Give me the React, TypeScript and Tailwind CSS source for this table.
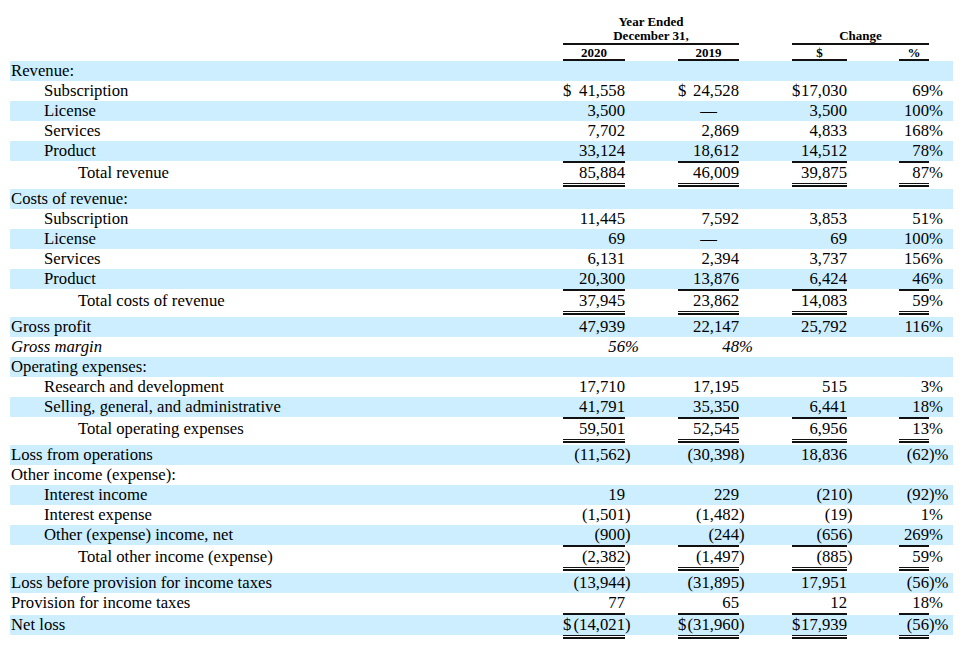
import React from "react";

type Rule = "single" | "double";
type Line = { label: string; ind?: number; v?: string[]; rule?: Rule; italic?: boolean };

const grid = "grid w-[943px] grid-cols-[553px_62px_53px_61px_53px_55px_52px_30px_24px]";

const lines: Line[] = [
  { label: "Revenue:" },
  { label: "Subscription", ind: 1, v: ["$41,558", "$24,528", "$17,030", "69%"] },
  { label: "License", ind: 1, v: ["3,500", "—", "3,500", "100%"] },
  { label: "Services", ind: 1, v: ["7,702", "2,869", "4,833", "168%"] },
  { label: "Product", ind: 1, v: ["33,124", "18,612", "14,512", "78%"], rule: "single" },
  { label: "Total revenue", ind: 2, v: ["85,884", "46,009", "39,875", "87%"], rule: "double" },
  { label: "Costs of revenue:" },
  { label: "Subscription", ind: 1, v: ["11,445", "7,592", "3,853", "51%"] },
  { label: "License", ind: 1, v: ["69", "—", "69", "100%"] },
  { label: "Services", ind: 1, v: ["6,131", "2,394", "3,737", "156%"] },
  { label: "Product", ind: 1, v: ["20,300", "13,876", "6,424", "46%"], rule: "single" },
  { label: "Total costs of revenue", ind: 2, v: ["37,945", "23,862", "14,083", "59%"], rule: "double" },
  { label: "Gross profit", v: ["47,939", "22,147", "25,792", "116%"] },
  { label: "Gross margin", italic: true, v: ["56%", "48%", "", ""] },
  { label: "Operating expenses:" },
  { label: "Research and development", ind: 1, v: ["17,710", "17,195", "515", "3%"] },
  { label: "Selling, general, and administrative", ind: 1, v: ["41,791", "35,350", "6,441", "18%"], rule: "single" },
  { label: "Total operating expenses", ind: 2, v: ["59,501", "52,545", "6,956", "13%"], rule: "double" },
  { label: "Loss from operations", v: ["(11,562)", "(30,398)", "18,836", "(62)%"] },
  { label: "Other income (expense):" },
  { label: "Interest income", ind: 1, v: ["19", "229", "(210)", "(92)%"] },
  { label: "Interest expense", ind: 1, v: ["(1,501)", "(1,482)", "(19)", "1%"] },
  { label: "Other (expense) income, net", ind: 1, v: ["(900)", "(244)", "(656)", "269%"], rule: "single" },
  { label: "Total other income (expense)", ind: 2, v: ["(2,382)", "(1,497)", "(885)", "59%"], rule: "double" },
  { label: "Loss before provision for income taxes", v: ["(13,944)", "(31,895)", "17,951", "(56)%"] },
  { label: "Provision for income taxes", v: ["77", "65", "12", "18%"], rule: "single" },
  { label: "Net loss", v: ["$(14,021)", "$(31,960)", "$17,939", "(56)%"], rule: "double" },
];

// split "$(14,021)" into "$", "(14,021", ")"
function split(raw: string) {
  let s = raw;
  let pre = "";
  let suf = "";
  if (s.startsWith("$")) {
    pre = "$";
    s = s.slice(1);
  }
  if (s.endsWith(")%")) suf = ")%";
  else if (s.endsWith("%")) suf = "%";
  else if (s.endsWith(")")) suf = ")";
  return { pre, num: s.slice(0, s.length - suf.length), suf };
}

function Row({ line, band }: { line: Line; band: boolean }) {
  const pad = line.ind === 2 ? "pl-[68px]" : line.ind === 1 ? "pl-[34px]" : "pl-px";
  const vals = line.v ?? ["", "", "", ""];
  return (
    <div>
      <div className={`${grid} h-5 leading-5 ${band ? "bg-[#cceeff]" : ""} ${line.italic ? "italic" : ""}`}>
        <div className={`${pad} whitespace-nowrap`}>{line.label}</div>
        {vals.map((raw, i) => {
          if (raw === "—")
            return (
              <React.Fragment key={i}>
                <div className="text-center">—</div>
                <div />
              </React.Fragment>
            );
          const c = split(raw);
          return (
            <React.Fragment key={i}>
              <div className="flex justify-between whitespace-nowrap">
                <span>{c.pre}</span>
                <span>{c.num}</span>
              </div>
              <div className="whitespace-nowrap">{c.suf}</div>
            </React.Fragment>
          );
        })}
      </div>
      {line.rule === "single" && (
        <div className={`${grid} h-[2px]`}>
          <div />
          {[0, 1, 2, 3].map((i) => (
            <React.Fragment key={i}>
              <div className="h-[2px] bg-[#111]" />
              <div />
            </React.Fragment>
          ))}
        </div>
      )}
      {line.rule === "double" && (
        <div className={`${grid} h-[4px] mb-[2px]`}>
          <div />
          {[0, 1, 2, 3].map((i) => (
            <React.Fragment key={i}>
              <div className="h-[4px] border-t border-b-2 border-[#111]" />
              <div />
            </React.Fragment>
          ))}
        </div>
      )}
    </div>
  );
}

export default function App() {
  return (
    <div className="min-h-screen bg-white text-black font-['Liberation_Serif',serif] pl-[10px] text-[16.7px]">
      {/* column heads */}
      <div className={`${grid} pt-[15px] text-[13px] font-bold leading-[14px]`}>
        <div className="col-start-2 col-span-3 text-center">Year Ended</div>
        <div className="col-start-2 col-span-3 row-start-2 text-center border-b-2 border-[#111]">December 31,</div>
        <div className="col-start-6 col-span-3 row-start-2 text-center border-b-2 border-[#111]">Change</div>
        <div className="col-start-2 row-start-3 text-center border-b-2 border-[#111] leading-[12px] pt-[2px]">2020</div>
        <div className="col-start-4 row-start-3 text-center border-b-2 border-[#111] leading-[12px] pt-[2px]">2019</div>
        <div className="col-start-6 row-start-3 text-center border-b-2 border-[#111] leading-[12px] pt-[2px]">$</div>
        <div className="col-start-8 row-start-3 text-center border-b-2 border-[#111] leading-[12px] pt-[2px]">%</div>
      </div>
      {lines.map((l, i) => (
        <Row key={i} line={l} band={i % 2 === 0} />
      ))}
    </div>
  );
}
